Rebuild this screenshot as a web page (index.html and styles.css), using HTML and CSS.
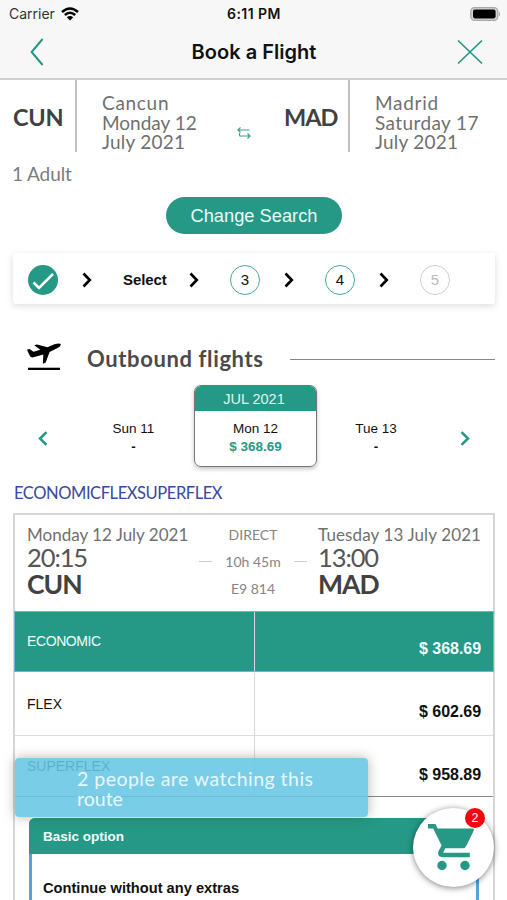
FILE: index.html
```html
<!DOCTYPE html>
<html lang="en">
<head>
<meta charset="utf-8">
<title>Book a Flight</title>
<link rel="stylesheet" href="styles.css">
</head>
<body>
<main class="screen">
  <header class="top">
    <div class="status">
      <div class="carrier"><span>Carrier</span>
        <svg width="18" height="14" viewBox="0 0 18 14" fill="none" stroke="#000" stroke-width="2.5"><path d="M1 5Q9-2 17 5M3.8 8Q9 3.4 14.2 8"/><path d="M9 13.6 5.8 10.3Q9 7.8 12.2 10.3Z" fill="#000" stroke="none"/></svg>
      </div>
      <span class="clock">6:11 PM</span>
      <svg class="battery" width="31" height="14" viewBox="0 0 31 14"><rect x=".8" y=".7" width="27" height="12.6" rx="3.8" fill="#d4d4d4" stroke="#a8a8a8" stroke-width="1.3"/><rect x="3" y="2.6" width="22.6" height="8.8" rx="1.8"/><path d="M29 4.6q2.2 2.4 0 4.8z" fill="#a8a8a8"/></svg>
    </div>
    <div class="nav">
      <svg width="14" height="28" viewBox="0 0 14 28" fill="none" stroke="#259886" stroke-width="2"><path d="M12.6 1 1.6 14l11 13"/></svg>
      <h1>Book a Flight</h1>
      <svg width="26" height="26" viewBox="0 0 26 26" fill="none" stroke="#259886" stroke-width="1.7"><path d="M1 1.500 25 24.500M25 1.500 1 24.500"/></svg>
    </div>
  </header>

  <section class="route">
    <b class="code">CUN</b>
    <p class="place"><span class="city">Cancun</span><br><span>Monday 12</span><br><span class="july">July 2021</span></p>
    <svg class="swap" width="14" height="12" viewBox="0 0 14 12" fill="none" stroke="#35a58c" stroke-width="1.200"><path d="M3.500 .5 1 3l2.500 2.500M1 3h11.500M10.500 6.500 13 9l-2.500 2.500M13 9H3.500Q2.500 9 2.500 8V6"/></svg>
    <b class="code mad">MAD</b>
    <p class="place"><span class="city">Madrid</span><br><span class="saturday">Saturday 17</span><br><span class="july">July 2021</span></p>
  </section>
  <p class="pax">1 Adult</p>
  <button class="change">Change Search</button>

  <section class="steps">
    <svg class="done" width="30" height="30" viewBox="0 0 30 30" fill="none"><circle cx="15" cy="15" r="15" fill="#259886"/><path d="M5.500 17.500 11 23 25 9" stroke="#fff" stroke-width="2.600"/></svg>
    <svg class="chev" width="10" height="16" viewBox="0 0 10 16"><path d="m1.500 1.500 6.300 6.500-6.300 6.500"/></svg>
    <b class="select">Select</b>
    <svg class="chev" width="10" height="16" viewBox="0 0 10 16"><path d="m1.500 1.500 6.300 6.500-6.300 6.500"/></svg>
    <span class="step">3</span>
    <svg class="chev" width="10" height="16" viewBox="0 0 10 16"><path d="m1.500 1.500 6.300 6.500-6.300 6.500"/></svg>
    <span class="step">4</span>
    <svg class="chev" width="10" height="16" viewBox="0 0 10 16"><path d="m1.500 1.500 6.300 6.500-6.300 6.500"/></svg>
    <span class="step off">5</span>
  </section>

  <section class="heading">
    <svg width="34" height="28" viewBox="0 0 34 28"><path d="M0 6.700 2.600 6 6.500 8.700 13.300 6.800 7.300 2.300 10 1.400 20.500 4.200 28 1.100Q33-.3 33.700 1.200 34.200 3 30.500 5L22.600 9 18.700 19.600 15.900 20.800 16.300 11.600 7.500 14Q4 15.200 2.800 12.800Z"/><path d="M1 24.700h32v2.300H1z"/></svg>
    <h2>Outbound flights</h2>
    <i class="rule"></i>
  </section>

  <section class="calendar">
    <svg class="arrow" width="10" height="15" viewBox="0 0 10 15"><path d="M8.500 1.200 2 7.500l6.500 6.300"/></svg>
    <div class="day"><span>Sun 11</span><b>-</b></div>
    <div class="day picked"><div class="month">JUL 2021</div><span>Mon 12</span><b class="fare">$ 368.69</b></div>
    <div class="day"><span>Tue 13</span><b>-</b></div>
    <svg class="arrow" width="10" height="15" viewBox="0 0 10 15"><path d="M1.500 1.200 8 7.500l-6.500 6.300"/></svg>
  </section>

  <p class="families">ECONOMICFLEXSUPERFLEX</p>

  <article class="flight">
    <div class="legs">
      <div class="leg"><span class="date">Monday 12 July 2021</span><span class="time">20:15</span><b class="port">CUN</b></div>
      <div class="mid"><span>DIRECT</span><span class="duration"><i></i><em>10h 45m</em><i></i></span><span>E9 814</span></div>
      <div class="leg"><span class="date tue">Tuesday 13 July 2021</span><span class="time">13:00</span><b class="port">MAD</b></div>
    </div>
    <div class="fareRow active"><span>ECONOMIC</span><b>$ 368.69</b></div>
    <div class="fareRow"><span>FLEX</span><b>$ 602.69</b></div>
    <div class="fareRow last"><span>SUPERFLEX</span><b>$ 958.89</b></div>
    <div class="option">
      <div class="optionHead">Basic option</div>
      <div class="optionBody">Continue without any extras</div>
    </div>
  </article>

  <aside class="toast"><span class="watching">2 people are watching this</span><br><span>route</span></aside>
  <div class="cart">
    <svg width="47" height="47" viewBox="0 0 47 47" fill="#259886"><path d="M0 0h7.500l2.200 4.600h34.800q2 0 1.200 2.200L38.500 21.500q-1.200 2.700-4 2.700H17.200l-2.100 4.600h26.700v4.500H14.200q-5.800-.8-3.600-6.300l3-5.600L5.200 4.500H0z"/><circle cx="14" cy="41.500" r="4.700"/><circle cx="37" cy="41.500" r="4.700"/></svg>
    <span class="badge">2</span>
  </div>
</main>
</body>
</html>
```
FILE: styles.css
```css
* { box-sizing: border-box; }
body { margin: 0; background: #fff; color: #111; font-family: "Liberation Sans", Arial, sans-serif; font-variant-ligatures: none; }
h1, h2, p { margin: 0; }
svg { flex: none; display: block; }
.screen { position: relative; width: 507px; height: 900px; overflow: hidden; background: #fff; }

.top { height: 80px; background: #f7f7f7; border-bottom: 2px solid #d0d0d0; font-family: Inter, sans-serif; }
.status { height: 27px; padding: 0 6px 0 9px; display: grid; grid-template-columns: 1fr auto 1fr; align-items: center; font-size: 14px; }
.carrier { display: flex; gap: 6px; align-items: center; color: #333; }
.clock { font-weight: 600; font-size: 14px; letter-spacing: .45px; margin-left: -2px; }
.battery { justify-self: end; }
.nav { height: 51px; padding: 0 24px 2px 30px; display: flex; align-items: center; justify-content: space-between; }
.nav h1 { font-size: 20px; font-weight: 600; letter-spacing: .02px; line-height: 30px; margin-left: 7px; }

.route { height: 72px; display: grid; grid-template-columns: 77px 160px 47px 66px 1fr; font-family: Lato, sans-serif; color: #707070; }
.code { height: 72px; border-right: 2px solid #c0c0c0; padding-left: 13px; font-size: 23.500px; line-height: 74px; letter-spacing: -.3px; color: #414141; }
.code.mad { padding-left: 0; letter-spacing: -1px; }
.place { padding: 13px 0 0 25px; font-size: 19px; line-height: 19.6px; white-space: nowrap; }
.city { letter-spacing: .7px; }
.saturday { letter-spacing: .4px; }
.july { letter-spacing: .25px; }
.swap { margin-top: 47px; }
.pax { margin: 11px 0 0 12px; font: 19px/22px Lato, sans-serif; color: #7c7c7c; letter-spacing: -.1px; }
.change { display: block; width: 176px; height: 37px; margin: 12px 0 0 166px; padding: 0; border: 0; border-radius: 19px; background: #259886; color: #e9fbf8; font: 18.3px "Liberation Sans", sans-serif; }

.steps { width: 482px; height: 51px; margin: 19px 0 0 13px; padding: 2px 0 0 15px; display: flex; align-items: center; border-radius: 3px; box-shadow: 0 2px 7px rgba(0,0,0,.14); font-size: 15px; }
.chev { fill: none; stroke: #000; stroke-width: 2.600; margin-left: 24px; }
.select { width: 46px; margin-left: 31px; margin-right: -4px; letter-spacing: -.1px; }
.step { width: 30px; height: 30px; margin-left: 31px; border: 1.500px solid #43ab91; border-radius: 50%; text-align: center; line-height: 28px; }
.step.off { border-color: #ccc; color: #bbb; }

.heading { height: 28px; margin: 39px 12px 0 27px; display: flex; align-items: center; }
.heading h2 { width: 203px; margin: 3px 0 0 26px; font: 700 22px/28px Lato, sans-serif; letter-spacing: .62px; color: #4a4a4a; white-space: nowrap; }
.rule { flex: 1; margin-top: 4px; height: 1px; background: #888; }

.calendar { height: 82px; margin: 14px 37px 0 38px; display: grid; grid-template-columns: 35px 121px 123px 118px 1fr; font-size: 13.500px; text-align: center; }
.arrow { margin-top: 46px; fill: none; stroke: #259886; stroke-width: 2.500; }
.arrow:last-child { justify-self: end; }
.day { padding-top: 35px; display: flex; flex-direction: column; line-height: 18px; }
.day.picked { padding: 0; border: 1.500px solid #777; border-radius: 7px; box-shadow: 0 2px 4px rgba(0,0,0,.25); overflow: hidden; }
.month { height: 26px; margin: -1px -1px 9px; padding-right: 3px; background: #259886; color: #dff7f2; font-size: 14.500px; line-height: 28px; }
.fare { color: #259886; }

.families { height: 20px; margin: 16px 0 0 14px; font: 16.500px/20px Lato, sans-serif; letter-spacing: -.42px; color: #39499b; white-space: nowrap; }
.flight { width: 482px; height: 400px; margin: 10px 0 0 13px; border: 2px solid #d6d6d6; }
.legs { height: 96px; padding: 11px 0 0 12px; display: grid; grid-template-columns: 172px 108px 1fr; margin-right: -2px; font-family: Lato, sans-serif; color: #707070; }
.leg { display: flex; flex-direction: column; align-items: flex-start; white-space: nowrap; }
.leg:last-child { padding-left: 11px; }
.date { font-size: 17px; line-height: 18px; }
.date.tue { letter-spacing: .12px; }
.time { font-size: 25.500px; line-height: 27px; letter-spacing: -1.100px; color: #555; }
.port { font-size: 26.500px; line-height: 26px; letter-spacing: -1px; color: #414141; }
.mid { text-align: center; font-size: 14px; line-height: 27px; margin-top: -5px; color: #858585; display: flex; flex-direction: column; }
.duration { display: flex; align-items: center; justify-content: space-between; white-space: nowrap; }
.duration em { font-style: normal; }
.duration i { width: 13px; height: 1px; background: #ccc; }
.fareRow { height: 63px; display: grid; grid-template-columns: 240px 1fr; border-bottom: 1px solid #ddd; font-size: 14px; }
.fareRow span { padding: 22px 0 0 12px; border-right: 1px solid #d8d8d8; line-height: 18px; }
.fareRow b { padding: 29px 12px 0 0; text-align: right; font-size: 16px; line-height: 20px; letter-spacing: -.05px; }
.fareRow.active { height: 61px; margin: 0 -1px 1px; background: #259886; border: 1.500px solid #6bb5e0; color: #eefffb; }
.fareRow.active span { padding-top: 20px; letter-spacing: -.4px; }
.fareRow.active b { padding-top: 27px; }
.fareRow.last { height: 61px; border-bottom-color: #888; }
.fareRow.last span { padding-top: 21px; }
.option { width: 450px; height: 110px; margin: 21px 0 0 14px; border: 3px solid #55a2dc; border-top: 0; border-radius: 6px 6px 0 0; font-weight: 700; font-size: 14.650px; }
.optionHead { height: 36px; margin: 0 -3px; padding-left: 14px; border-radius: 6px 6px 0 0; background: #259886; color: #f2fffd; font-size: 13.500px; line-height: 38px; }
.optionBody { padding: 24px 0 0 11px; line-height: 20px; }

.toast { position: absolute; left: 15px; top: 758px; width: 353px; height: 59px; padding: 11px 0 0 62px; border-radius: 4px; background: rgba(103,198,226,.88); box-shadow: 0 0 12px rgba(70,70,50,.4); color: #e6f8fd; font: 19.500px/19.500px Lato, sans-serif; white-space: nowrap; }
.watching { letter-spacing: .47px; }
.cart { position: absolute; left: 413px; top: 808px; width: 81px; height: 79px; padding: 16px 0 0 15px; border-radius: 50%; background: #fff; box-shadow: 0 1px 6px rgba(0,0,0,.5); }
.badge { position: absolute; right: 9px; top: 0; width: 20px; height: 20px; border-radius: 50%; background: #f50510; color: #fff; font-size: 12.500px; line-height: 21px; text-align: center; }
```
